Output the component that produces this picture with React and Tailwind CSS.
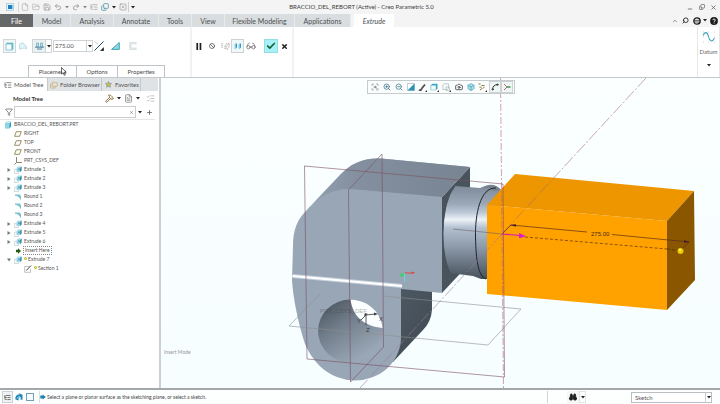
import React, { useState } from 'react';
import {
  File, FolderOpen, Save, Undo2, Redo2, ListTree, Copy, SquareX, Minus, X, ChevronUp, Search,
  Ban, Glasses, Check, Filter, Plus, FileText, Hammer, ZoomIn, ZoomOut, ScanSearch,
  Camera, Box, Binoculars, ListChecks, Star, Folders, Spline,
} from 'lucide-react';

const Caret = ({ className = '' }) => (
  <svg viewBox="0 0 4 3" className={`w-1 h-[3px] shrink-0 ${className}`}>
    <path d="M0 0h4L2 2.6z" fill="#222" />
  </svg>
);

const CaretButton = ({ label, className = 'w-[7px]' }) => (
  <button aria-label={label} className={`flex items-center justify-center h-3 shrink-0 ${className}`}>
    <Caret />
  </button>
);

const IconButton = ({ label, className = 'w-[11px] h-3', children }) => (
  <button aria-label={label} title={label} className={`flex items-center justify-center shrink-0 ${className}`}>
    {children}
  </button>
);

const TitleBar = () => (
  <header className="h-[14px] shrink-0 flex items-center justify-between bg-[#f4f4f4] text-[#999]">
    <div className="flex-1 flex items-center pl-1">
      <IconButton label="Application">
        <svg viewBox="0 0 8 8" className="w-2 h-2">
          <rect x="0.5" y="0.5" width="7" height="7" fill="#e9f4fa" stroke="#9fc3d8" strokeWidth="0.7" />
          <rect x="2" y="2" width="4.4" height="4" fill="#1583c6" />
        </svg>
      </IconButton>
      <span className="w-px h-[10px] ml-[3px] bg-[#d4d4d4]" />
      <IconButton label="New"><File size={8} strokeWidth={1.5} /></IconButton>
      <IconButton label="Open"><FolderOpen size={8} strokeWidth={1.5} /></IconButton>
      <IconButton label="Save"><Save size={8} strokeWidth={2} /></IconButton>
      <IconButton label="Undo"><Undo2 size={8} strokeWidth={2.5} /></IconButton>
      <CaretButton label="Undo list" className="w-[7px] opacity-50" />
      <IconButton label="Redo"><Redo2 size={8} strokeWidth={2.5} /></IconButton>
      <CaretButton label="Redo list" className="w-[7px] opacity-50" />
      <IconButton label="Regenerate"><ListTree size={8} strokeWidth={2} /></IconButton>
      <IconButton label="Windows"><Copy size={8} strokeWidth={2} className="text-[#35809c] -scale-y-100" /></IconButton>
      <CaretButton label="Windows list" />
      <IconButton label="Close window"><SquareX size={8} strokeWidth={2} /></IconButton>
      <span className="w-px h-[10px] bg-[#cfcfcf]" />
      <CaretButton label="Customize toolbar" />
    </div>
    <h1 className="text-[6px] leading-[10px] text-[#3c3c3c] whitespace-nowrap">
      BRACCIO_DEL_REBORT (Active) - Creo Parametric 5.0
    </h1>
    <div className="flex-1 flex items-center justify-end gap-px pr-px text-[#555]">
      <IconButton label="Minimize"><Minus size={6} strokeWidth={3} className="mt-1" /></IconButton>
      <IconButton label="Restore"><Copy size={6} strokeWidth={2.5} className="-scale-y-100" /></IconButton>
      <IconButton label="Close"><X size={7} strokeWidth={2.5} /></IconButton>
    </div>
  </header>
);

const menuTabs = [
  { name: 'Model', width: 'w-[38px]' },
  { name: 'Analysis', width: 'w-[43px]' },
  { name: 'Annotate', width: 'w-[45px]' },
  { name: 'Tools', width: 'w-[33px]' },
  { name: 'View', width: 'w-[33px]' },
  { name: 'Flexible Modeling', width: 'w-[70px]' },
  { name: 'Applications', width: 'w-[56px]' },
];

const MenuTabs = () => (
  <nav className="h-[13px] shrink-0 flex bg-[#f4f4f4] text-[7px] leading-[12px] text-[#4c4f51]">
    <button className="w-[33px] bg-[#666768] text-white">File</button>
    {menuTabs.map((tab) => (
      <button key={tab.name} className={`${tab.width} bg-[#d9dddf] border-r border-[#e8ebec] whitespace-nowrap`}>
        {tab.name}
      </button>
    ))}
    <button className="w-[40px] ml-[3px] bg-white italic">Extrude</button>
    <div className="flex-1 flex items-center justify-end pr-px text-[#222]">
      <IconButton label="Minimize ribbon" className="w-[10px] h-3"><ChevronUp size={6} strokeWidth={2} /></IconButton>
      <IconButton label="Search" className="w-[11px] h-3"><Search size={7} strokeWidth={3} className="-scale-x-100" /></IconButton>
      <IconButton label="Learning" className="w-[11px] h-3">
        <svg viewBox="0 0 8 8" className="w-2 h-2">
          <circle cx="4" cy="4" r="3.2" fill="none" stroke="#1c1c1c" strokeWidth="1.3" />
          <path d="M1 3.4h6M1 5h6" stroke="#1c1c1c" strokeWidth="0.7" />
        </svg>
      </IconButton>
      <CaretButton label="Learning list" className="w-[6px]" />
      <IconButton label="Help" className="w-[11px] h-3">
        <svg viewBox="0 0 8 8" className="w-2 h-2">
          <circle cx="4" cy="4" r="3.9" fill="#1c1c1c" />
          <path d="M2.8 3.1c0-1.5 2.5-1.5 2.5 0 0 .9-1.2.9-1.2 1.8M4.1 5.6v.9" fill="none" stroke="#fff" strokeWidth="0.9" />
        </svg>
      </IconButton>
    </div>
  </nav>
);

const Dashboard = () => {
  const [depth, setDepth] = useState('275.00');

  return (
    <section className="h-[51px] shrink-0 flex bg-white border-b border-[#c3c8cb]">
      <div className="w-[192px] flex flex-col justify-between border-r-2 border-[#f1f2f3]">
        <div className="flex items-center h-[14px] mt-3 ml-[3px]">
          <IconButton label="Solid" className="w-[13px] h-[14px] bg-[#eff6f7] border border-[#cfd6d8]">
            <svg viewBox="0 0 9 9" className="w-[9px] h-[9px]">
              <path d="M1 2 2.2 1H8v6L6.8 8z" fill="#6fc7d6" stroke="#4ba9ba" strokeWidth="0.5" />
              <path d="M1 2h5.8v6H1z" fill="#fafdfd" stroke="#4ba9ba" strokeWidth="0.6" />
            </svg>
          </IconButton>
          <IconButton label="Surface" className="w-[13px] h-[14px] mr-[3px]">
            <svg viewBox="0 0 8 8" className="w-2 h-2">
              <path d="M.6 7V3c0-2.6 4.8-2.6 4.8 0l2 1v3L5.4 6z" fill="#e2f6f8" stroke="#9cc9d0" strokeWidth="0.6" />
            </svg>
          </IconButton>
          <IconButton label="Depth" className="w-[14px] h-[14px] bg-[#e8f0f2] border border-[#cdd3d6]">
            <svg viewBox="0 0 9 8" className="w-[9px] h-2">
              <path d="M1.5 1h2v4h-2zM5.5 1h2v4h-2z" fill="#b5e0ea" stroke="#4a8ea4" strokeWidth="0.5" />
              <path d="M0 5.2h9M2 7h5" stroke="#2f6f88" strokeWidth="0.8" />
            </svg>
          </IconButton>
          <CaretButton label="Depth options" className="w-[6px] h-[14px] border-y border-r border-[#cdd3d6]" />
          <div className="flex h-3 ml-px border border-[#cfd3d5]">
            <input
              aria-label="Depth value"
              value={depth}
              onChange={(e) => setDepth(e.target.value)}
              className="w-[32px] px-px text-[6px] leading-[10px] text-[#555] outline-none"
            />
            <button aria-label="Recent values" className="w-[6px] flex items-center justify-center border-l border-[#cfd3d5]">
              <Caret />
            </button>
          </div>
          <IconButton label="Flip direction" className="w-3 h-[14px]">
            <svg viewBox="0 0 10 10" className="w-[10px] h-[10px]">
              <path d="m9.500.5-9 9" stroke="#174b68" strokeWidth="1" />
              <path d="M.5.5 4 3" stroke="#aaa" strokeWidth="0.6" />
              <path d="M9.7 9.7V6.6L6.6 9.7z" fill="#222" stroke="#222" strokeWidth="0.6" />
            </svg>
          </IconButton>
          <IconButton label="Remove material" className="w-[13px] h-[14px] ml-1">
            <svg viewBox="0 0 9 8" className="w-[9px] h-2">
              <path d="M.5 7.4 8.3.5v6.9z" fill="#8bdbe5" stroke="#258fa5" strokeWidth="0.8" />
            </svg>
          </IconButton>
          <IconButton label="Thicken sketch" className="w-[13px] h-[14px] ml-1">
            <svg viewBox="0 0 8 8" className="w-2 h-2">
              <path d="M7.6.6H.7v6.8h6.9M7.6 1.8H1.900v4.400h5.700" fill="none" stroke="#a9bcc0" strokeWidth="0.5" />
            </svg>
          </IconButton>
        </div>
        <div className="flex ml-[28px] text-[6px] leading-[11px] text-[#4c4c4c] text-center">
          <button className="w-[49px] border-t border-x border-[#bfc3c5]">Placement</button>
          <button className="w-[41px] border-t border-r border-[#bfc3c5]">Options</button>
          <button className="w-[47px] border-t border-r border-[#bfc3c5]">Properties</button>
        </div>
      </div>

      <div className="w-[102px] border-r-2 border-[#f1f2f3]">
        <div className="flex items-center h-[14px] mt-3 pl-px">
          <IconButton label="Pause" className="w-3 h-[14px]">
            <svg viewBox="0 0 6 7" className="w-[6px] h-[7px]">
              <path d="M.4 0h1.7v7H.4zM3.6 0h1.7v7H3.6z" fill="#1d1d1d" />
            </svg>
          </IconButton>
          <IconButton label="No preview" className="w-[14px] h-[14px]"><Ban size={6} strokeWidth={3} className="text-[#555]" /></IconButton>
          <IconButton label="Unattached preview" className="w-3 h-[14px]">
            <svg viewBox="0 0 9 8" className="w-[9px] h-2">
              <path d="M1 1v5M4 7V4l2-3M5 7V5l3-4v4l-2 3" fill="none" stroke="#888" strokeWidth="0.7" strokeDasharray="1.3 .6" />
            </svg>
          </IconButton>
          <IconButton label="Attached preview" className="w-[13px] h-[14px] bg-[#eff7f9] border border-[#ccd2d4]">
            <svg viewBox="0 0 9 8" className="w-[9px] h-2">
              <path d="M1 2h3v3L2.6 7H1zM5 2h3v3L6.6 7H5z" fill="#bfe8f3" />
              <path d="M2.6 1.5H4v3.8L2.6 7zM6.6 1.5H8v3.8L6.6 7z" fill="#2b9cc3" />
            </svg>
          </IconButton>
          <IconButton label="Verify" className="w-[14px] h-[14px]"><Glasses size={10} strokeWidth={2} className="text-[#777]" /></IconButton>
          <IconButton label="OK" className="w-[14px] h-[14px] ml-[6px] bg-[#a6f1f7] border border-[#94dfe7]">
            <Check size={10} strokeWidth={4} className="text-[#176130]" />
          </IconButton>
          <IconButton label="Cancel" className="w-3 h-[14px]"><X size={7} strokeWidth={5} className="text-[#1d1d1d]" /></IconButton>
        </div>
      </div>

      <div className="flex-1" />
      <button className="w-[23px] flex flex-col items-center border-x border-[#e4e6e7] text-[6px] leading-[8px] text-[#666]">
        <svg viewBox="0 0 14 12" className="w-[14px] h-3 mt-1">
          <path d="M1 1h1M6 1h1M12 1h1M1 11h1M6 11h1M12 11h1M1 6h1M12 6h1" stroke="#d9c48d" strokeWidth="0.8" />
          <path d="M1 4.500C3 0 5.500 1 6.500 5.500s3.500 6.500 6 1.500" fill="none" stroke="#3fa3c0" strokeWidth="1.1" />
        </svg>
        <span className="mt-[5px]">Datum</span>
        <Caret className="mt-2" />
      </button>
    </section>
  );
};

const PlaneIcon = () => (
  <svg viewBox="0 0 8 6" className="w-2 h-[6px]">
    <path d="M2.3.7h5L5.5 5.3h-5z" fill="#fffef6" stroke="#80754a" strokeWidth="0.8" />
  </svg>
);

const CsysIcon = () => (
  <svg viewBox="0 0 8 8" className="w-2 h-2">
    <path d="M2.5 0v5.5H8M2.5 5.5l-2 2" fill="none" stroke="#706b55" strokeWidth="0.8" />
  </svg>
);

const PartIcon = () => (
  <svg viewBox="0 0 8 8" className="w-2 h-2">
    <path d="M1 2.5 2.800.8H7v4.700L5.500 7.300H1z" fill="#2d9bc0" />
    <path d="M1 2.500h4.500v4.800H1z" fill="#8fd5e4" />
    <path d="M1 2.500 2.800.8H7L5.500 2.500z" fill="#c7edf3" />
  </svg>
);

const ExtrudeIcon = () => (
  <svg viewBox="0 0 8 8" className="w-2 h-2">
    <path d="M.4 3.2h4v4.300h-4z" fill="#f5fbfc" stroke="#a2bcc5" strokeWidth="0.5" />
    <path d="M2.500 2 4 .6h3.600v4L6 6H2.500z" fill="#a5dbe8" />
    <path d="M6 2 7.600.6v4L6 6z" fill="#4090ae" />
    <path d="m3.500 4.800 2-2m0 0H4M5.500 2.800v1.500" stroke="#2a7894" strokeWidth="0.5" />
  </svg>
);

const RoundIcon = () => (
  <svg viewBox="0 0 8 8" className="w-2 h-2">
    <path d="M1 1.500h4.500L7 3.500v4C5.800 4.600 3.800 2.800 1 2.800z" fill="#75bdd2" />
    <path d="M1 1.500 3 .8h3.500L7 3.500 5.500 1.500z" fill="#cde9f0" />
  </svg>
);

const InsertIcon = () => (
  <svg viewBox="0 0 8 8" className="w-2 h-2">
    <path d="M2 2.800h2V1.200L7 4 4 6.800V5.200H2z" fill="#245c14" />
  </svg>
);

const SketchIcon = () => (
  <svg viewBox="0 0 8 8" className="w-2 h-2">
    <path d="M5.500 1.500H.7v5.800h5.800V4" fill="none" stroke="#999" strokeWidth="0.6" />
    <path d="m2.300 5.500 4.800-5" stroke="#444" strokeWidth="1" />
  </svg>
);

const treeIcons = {
  plane: PlaneIcon,
  csys: CsysIcon,
  extrude: ExtrudeIcon,
  round: RoundIcon,
  insert: InsertIcon,
  sketch: SketchIcon,
};

const treeItems = [
  { name: 'RIGHT', icon: 'plane' },
  { name: 'TOP', icon: 'plane' },
  { name: 'FRONT', icon: 'plane' },
  { name: 'PRT_CSYS_DEF', icon: 'csys' },
  { name: 'Extrude 1', icon: 'extrude', toggle: 'closed' },
  { name: 'Extrude 2', icon: 'extrude', toggle: 'closed' },
  { name: 'Extrude 3', icon: 'extrude', toggle: 'closed' },
  { name: 'Round 1', icon: 'round' },
  { name: 'Round 2', icon: 'round' },
  { name: 'Round 3', icon: 'round' },
  { name: 'Extrude 4', icon: 'extrude', toggle: 'closed' },
  { name: 'Extrude 5', icon: 'extrude', toggle: 'closed' },
  { name: 'Extrude 6', icon: 'extrude', toggle: 'closed' },
  { name: 'Insert Here', icon: 'insert', selected: true },
  { name: 'Extrude 7', icon: 'extrude', toggle: 'open', isNew: true },
  { name: 'Section 1', icon: 'sketch', nested: true, isNew: true },
];

const TreeRow = ({ item }) => {
  const Icon = treeIcons[item.icon];
  return (
    <li className={`flex items-center h-[9px] ${item.nested ? 'pl-[17px]' : 'pl-[7px]'}`}>
      <span className="w-[7px] shrink-0">
        {item.toggle && (
          <button aria-label={`Toggle ${item.name}`} className="block">
            <svg viewBox="0 0 4 4" className="w-1 h-1">
              <path d={item.toggle === 'open' ? 'M0 .5h4l-2 3z' : 'M.5 0v4l3-2z'} fill="#777" />
            </svg>
          </button>
        )}
      </span>
      <Icon />
      {item.isNew && <span className="w-[3px] h-[3px] ml-[2px] mb-[2px] rounded-full border border-[#a6b51c] bg-[#eef06a]" />}
      <span className={item.selected ? 'ml-px px-px leading-[7px] border border-dotted border-[#888]' : item.isNew ? 'ml-px' : 'ml-[2px]'}>
        {item.name}
      </span>
    </li>
  );
};

const ModelTree = () => {
  const [filter, setFilter] = useState('');

  return (
    <aside className="w-[161px] shrink-0 flex flex-col bg-white border-r-2 border-[#ccd0d2] text-[#555]">
      <div className="flex h-[13px] mr-px bg-[#e0e3e5] text-[6px] leading-[12px] whitespace-nowrap">
        <button className="w-[47px] flex items-center gap-[2px] pl-1 bg-white">
          <ListTree size={8} strokeWidth={2} /> Model Tree
        </button>
        <button className="w-[55px] flex items-center gap-[2px] pl-[2px] border-x border-[#c5c9cb]">
          <Folders size={8} strokeWidth={2} className="text-[#c2a452]" /> Folder Browser
        </button>
        <button className="w-[39px] flex items-center gap-[3px] pl-[3px] border-r border-[#c5c9cb]">
          <Star size={7} className="text-[#4b94b3] fill-[#dfb447]" /> Favorites
        </button>
      </div>
      <div className="flex items-center h-[14px] pl-[13px]">
        <h2 className="flex-1 text-[6px] font-bold text-[#333]">Model Tree</h2>
        <IconButton label="Settings">
          <Hammer size={9} strokeWidth={2.5} className="text-[#8c6a3c]" />
        </IconButton>
        <CaretButton label="Settings list" className="w-2" />
        <IconButton label="Show"><FileText size={9} strokeWidth={1.5} /></IconButton>
        <CaretButton label="Show list" className="w-2" />
        <IconButton label="Columns" className="w-[17px] h-3"><ListChecks size={9} strokeWidth={1.5} className="opacity-60" /></IconButton>
      </div>
      <div className="flex items-center h-[15px] pl-1 mr-1 border-b border-[#e4e6e7]">
        <IconButton label="Filter" className="w-[10px] h-3"><Filter size={8} strokeWidth={2} /></IconButton>
        <div className="flex-1 flex items-center h-3 border border-[#c9cdcf]">
          <input
            aria-label="Filter model tree"
            value={filter}
            onChange={(e) => setFilter(e.target.value)}
            className="flex-1 min-w-0 px-1 text-[5px] outline-none"
          />
          <IconButton label="Clear filter" className="w-2 h-2"><X size={5} strokeWidth={2} /></IconButton>
        </div>
        <CaretButton label="Filter options" className="w-2" />
        <IconButton label="Add filter"><Plus size={7} strokeWidth={2.5} /></IconButton>
      </div>
      <ul className="text-[5px] leading-[9px] whitespace-nowrap">
        <li className="flex items-center h-[9px] pl-[4px] gap-[2px]">
          <PartIcon />
          <span>BRACCIO_DEL_REBORT.PRT</span>
        </li>
        {treeItems.map((item) => (
          <TreeRow key={item.name} item={item} />
        ))}
      </ul>
    </aside>
  );
};

const CsysToggle = () => (
  <svg viewBox="0 0 8 8" className="w-2 h-2">
    <path d="m1 1 3 3-3 3" fill="none" stroke="#c66" strokeWidth="1" />
    <path d="M4 4h3.5" stroke="#2a9d5a" strokeWidth="1.5" />
  </svg>
);

const RepaintIcon = () => (
  <svg viewBox="0 0 8 8" className="w-2 h-2">
    <path d="M.5.5h7v7h-7z" fill="#fff" stroke="#98aab2" strokeWidth="0.6" />
    <path d="m.5 7.5 7-7v7z" fill="#2693b5" />
  </svg>
);

const CubeIcon = () => (
  <svg viewBox="0 0 9 9" className="w-[9px] h-[9px]">
    <path d="M.8 2.3 2.5.7h5v4.500L6 7H.8z" fill="#3aa5c6" />
    <path d="M.8 2.300H6V7H.8z" fill="#effafc" stroke="#62b6cb" strokeWidth="0.5" />
    <path d="M9 7v2H7z" fill="#333" />
  </svg>
);

const OrientationIcon = () => (
  <svg viewBox="0 0 9 9" className="w-[9px] h-[9px]">
    <path d="M.8 1.800 2 .7h4.500v4.500L5.500 6.500H.8zM4 4h3.500v3.500H4z" fill="#f4f9fa" stroke="#9db2ba" strokeWidth="0.6" />
    <path d="M9 7v2H7z" fill="#333" />
  </svg>
);

const SpinePencilIcon = () => (
  <svg viewBox="0 0 9 9" className="w-[9px] h-[9px]">
    <path d="M.8 7.200c2 .3 2.800-.6 3.200-2L7 1.500" fill="none" stroke="#4a4f52" strokeWidth="1.700" />
    <path d="M9 7v2H7z" fill="#333" />
  </svg>
);

const DatumDisplayIcon = () => (
  <svg viewBox="0 0 9 9" className="w-[9px] h-[9px]">
    <path d="M.5 1h2M3.500 2.500h3M1.500 4.200h2M4.500 5.500l2-1.500M2 7l2-1.500" stroke="#7d6f38" strokeWidth="0.9" />
    <path d="M9 7v2H7z" fill="#333" />
  </svg>
);

const graphicsTools = [
  { label: 'Refit', icon: <ScanSearch size={8} className="text-[#607883]" /> },
  { label: 'Zoom In', icon: <ZoomIn size={8} strokeWidth={2.5} className="text-[#4c7f92]" /> },
  { label: 'Zoom Out', icon: <ZoomOut size={8} strokeWidth={2.5} className="text-[#4c7f92]" /> },
  { label: 'Repaint', icon: <RepaintIcon /> },
  { label: 'Rendering Options', icon: <SpinePencilIcon /> },
  { label: 'Display Style', icon: <CubeIcon /> },
  { label: 'Saved Orientations', icon: <OrientationIcon /> },
  { label: 'View Manager', icon: <Camera size={8} strokeWidth={2.5} className="text-[#444]" /> },
  { label: 'Perspective', icon: <Box size={8} strokeWidth={2} className="text-[#3594b0] fill-[#b7e3ee]" /> },
  { label: 'Datum Display', icon: <DatumDisplayIcon /> },
  { label: 'Annotation Display', icon: <Spline size={8} strokeWidth={3} className="text-[#333]" />, active: true },
  { label: 'Spin Center', icon: <CsysToggle />, active: true },
];

const GraphicsToolbar = () => (
  <div className="absolute top-[2px] left-1/2 -translate-x-1/2 flex items-center h-[14px] px-px bg-[#fbfcfc] border border-[#c6cbcd]">
    {graphicsTools.map((tool) => (
      <IconButton
        key={tool.label}
        label={tool.label}
        className={tool.active ? 'w-3 h-3 bg-[#f0f6f6] border border-[#cdd3d4]' : 'w-3 h-3'}
      >
        {tool.icon}
      </IconButton>
    ))}
  </div>
);

const ModelScene = () => (
  <svg viewBox="161 78 559 310" preserveAspectRatio="xMidYMid meet" className="block w-full h-full">
    <defs>
      <linearGradient id="neck" x1="0" y1="0" x2="0" y2="1">
        <stop offset="0" stopColor="#7c8898" />
        <stop offset="0.2" stopColor="#9aa7b7" />
        <stop offset="0.29" stopColor="#b9c6d6" />
        <stop offset="0.37" stopColor="#edf2f8" />
        <stop offset="0.46" stopColor="#b2bfcf" />
        <stop offset="0.65" stopColor="#8f9cac" />
        <stop offset="1" stopColor="#47515c" />
      </linearGradient>
      <linearGradient id="bore" x1="0.1" y1="0" x2="0.7" y2="0.9">
        <stop offset="0" stopColor="#48535d" />
        <stop offset="0.45" stopColor="#727e8b" />
        <stop offset="1" stopColor="#9aa7b6" />
      </linearGradient>
      <linearGradient id="side" x1="0" y1="0" x2="1" y2="1">
        <stop offset="0" stopColor="#505c66" />
        <stop offset="1" stopColor="#3f4952" />
      </linearGradient>
      <linearGradient id="roundTop" x1="0" y1="0" x2="1" y2="0">
        <stop offset="0" stopColor="#94a2b1" />
        <stop offset="0.3" stopColor="#84909f" />
        <stop offset="1" stopColor="#788492" />
      </linearGradient>
    </defs>

    {/* arm body */}
    <path d="M401 286 432 290V310Q431 322 423 330L393 362 380 340z" fill="url(#side)" />
    <path d="M442 197 470 167V263L442 293z" fill="#48535c" />
    <path d="M293 245C293 231 297 220 305 212L341 174Q357 157 381 158.5L470 167 442 197V293L401 289 292 281z" fill="#98a6b6" />
    <path d="M305 212 341 174Q357 157 381 158.5L470 167 442 197 351 189Q325 188 305 212z" fill="url(#roundTop)" />
    <path d="M292 280C293 298 298 322 305 344Q316 369 337 377 355 384 373 377C392 370 401 352 401 338V287z" fill="#98a6b6" />
    <path d="M292.5 276 402 286" stroke="#c7d2de" strokeWidth="4" />
    <path d="M292.5 276 402 286" stroke="#fff" strokeWidth="2" />

    {/* bore */}
    <ellipse cx="350.5" cy="331" rx="32.5" ry="31.5" fill="url(#bore)" />
    <path d="M350.5 299.5C353 317 364 326 382.5 328 381 312 368 300 350.5 299.500z" fill="#fcffff" />

    {/* neck and collar */}
    <path d="M455 186 480 188 485 186Q494 182 501 190V279H481L473 276 450 273Q443 258 443 232 445 198 455 186z" fill="url(#neck)" />
    <path d="M455 186Q443 201 443 234 443 258 450 273" fill="none" stroke="#414b55" strokeWidth="0.8" />
    <path d="M481 188 492 185Q498 186 501 190L494 191 489 188z" fill="#75818f" />
    <path d="M496 188C480 187 475 215 475.5 237 476 260 478 276 486 279" fill="none" stroke="#1e252b" strokeWidth="1" />

    {/* extruded block */}
    <path d="M487 205 667 221V310L487 294z" fill="#ffa200" />
    <path d="M487 205 515 174 694 191 667 221z" fill="#ee9600" />
    <path d="M667 221 694 191 695 280 667 310z" fill="#8a5600" />

    {/* datum planes */}
    <g fill="none" stroke="#7b4f60" strokeWidth="0.6">
      <path d="M304.5 166 503 184 504.5 377 307 359z" />
      <path d="M348.5 190 382 154 383.5 347 350.5 382z" />
      <path d="M289 326 320 294M383 296 521 309 488 345 289 326" stroke="#8d8f91" />
    </g>

    {/* axes */}
    <g fill="none" strokeWidth="0.6">
      <path d="M500.5 78 503.5 388" stroke="#c05c7a" strokeDasharray="7 2 2 2" />
      <path d="M646 78 502 234" stroke="#a36d70" strokeDasharray="12 2 2 2" />
      <path d="M502 234 360 388" stroke="#9b7a9b" strokeDasharray="12 2 2 2" />
      <path d="M453 229 502 234" stroke="#6b6268" />
    </g>

    {/* depth dimension */}
    <g fill="none" stroke="#5c2d16" strokeWidth="0.7">
      <path d="M502 234 511 225 587 232M612 234.5 689 242 680 251" />
      <path d="M525 237 667 249" strokeDasharray="3 2" />
      <path d="M667 249 680 251" stroke="#50280a" strokeDasharray="3 2" />
    </g>
    <path d="m510 225 6-.8v2.600zM690 242l-6-2v2.800z" fill="#4a1d2c" />
    <text x="591" y="236" fontSize="6" fill="#4a2c10" className="font-['Liberation_Sans']">275.00</text>
    <path d="M502 234 520 235.500" stroke="#d317b0" strokeWidth="1.2" />
    <path d="m519 233 7 3.200-7 2z" fill="#e01ad0" />
    <circle cx="680.5" cy="251" r="3" fill="#eec800" />
    <circle cx="680" cy="250" r="1.200" fill="#fff36b" />

    {/* spin center */}
    <path d="M404 273h9" stroke="#e43d3d" strokeWidth="0.9" />
    <path d="m412 271.500 3 1.300-3 1.300z" fill="#e43d3d" />
    <path d="M404.500 273v9" stroke="#5ddbe0" strokeWidth="1" />
    <path d="M400.500 273.500h3v3h-3z" fill="#2fd45c" />

    {/* part coordinate system */}
    <g className="font-['Liberation_Sans']" fontSize="6" fill="#3c3c3c">
      <text x="320" y="313" opacity="0.4">PRT_CSYS_DEF</text>
      <path d="M366 315v10M366 315l10-1M366 315l-5 5" stroke="#333" strokeWidth="0.8" />
      <path d="m374 312.500 4 1.500-4 1.500zM364 316l1-3 3 1z" />
      <text x="357" y="323">Y</text>
      <text x="366" y="332">Z</text>
      <text x="379" y="321">X</text>
    </g>
  </svg>
);

const GraphicsArea = () => (
  <main className="relative flex-1 min-w-0 bg-linear-to-b from-[#fbffff] to-[#f6feff]">
    <ModelScene />
    <GraphicsToolbar />
    <p className="absolute left-[3px] bottom-8 text-[5px] leading-[8px] text-[#999]">Insert Mode</p>
  </main>
);

const StatusBar = () => (
  <footer className="h-4 shrink-0 flex items-center border-t-2 border-[#a3a8ab] bg-[#fdfefe] text-[#444]">
    <div className="flex-1 flex items-center pl-[2px]">
      <IconButton label="Navigator" className="w-[11px] h-3 bg-[#f0f3f3] border border-[#ccd1d3]">
        <ListTree size={7} strokeWidth={2.5} />
      </IconButton>
      <IconButton label="Browser" className="w-[11px] h-3">
        <svg viewBox="0 0 8 8" className="w-2 h-2">
          <path d="M.5 6.500c-.5-3 1-5 4-5l-.4-1.300L7.500 1.800v5H5.600V4C4 4 3.500 5 3.500 7.500z" fill="#2387b4" />
          <path d="M2 5.500 4.500 3" stroke="#c2edf8" strokeWidth="1" />
        </svg>
      </IconButton>
      <IconButton label="Full screen" className="w-[11px] h-3">
        <span className="w-2 h-2 border border-[#6e9fbb] bg-[#f8fcfd]" />
      </IconButton>
      <span className="w-px h-3 ml-1 bg-[#dcdfe0]" />
      <svg viewBox="0 0 6 6" className="w-[6px] h-[6px] mr-px">
        <path d="M.3 1.500h2.500V.5L5.800 3 2.800 5.500v-1H.3z" fill="#1f82b0" />
      </svg>
      <p className="text-[5px] leading-[8px] whitespace-nowrap">
        Select a plane or planar surface as the sketching plane, or select a sketch.
      </p>
    </div>
    <div className="flex items-center pr-2">
      <span className="w-px h-3 mr-[19px] bg-[#cfd3d5]" />
      <IconButton label="Find" className="w-[12px] h-3 bg-[#f5f7f7]">
        <Binoculars size={8} strokeWidth={3} className="text-[#222] fill-[#222]" />
      </IconButton>
      <CaretButton label="Find options" className="w-[7px] border border-[#e1e4e5]" />
      <label className="relative flex items-center ml-[45px]">
        <select aria-label="Selection filter" className="appearance-none w-[81px] h-[11px] pl-[3px] text-[6px] leading-[9px] bg-white border border-[#b8bec1] text-[#555]">
          <option>Sketch</option>
        </select>
        <span className="absolute right-0 w-[7px] h-[11px] flex items-center justify-center border-l border-[#c9cdcf] pointer-events-none">
          <Caret />
        </span>
      </label>
    </div>
  </footer>
);

const Cursor = () => (
  <svg viewBox="0 0 6 9" className="absolute left-[61px] top-[67px] w-[6px] h-[9px] pointer-events-none">
    <path d="M.5.5V7l1.600-1.300 1.100 2.600 1.100-.5-1.100-2.500h2z" fill="#fff" stroke="#222" strokeWidth="0.7" />
  </svg>
);

const App = () => (
  <div className="relative h-screen flex flex-col overflow-hidden bg-white font-['Lato',sans-serif]">
    <TitleBar />
    <MenuTabs />
    <Dashboard />
    <div className="flex-1 min-h-0 flex">
      <ModelTree />
      <GraphicsArea />
    </div>
    <StatusBar />
    <Cursor />
  </div>
);

export default App;
